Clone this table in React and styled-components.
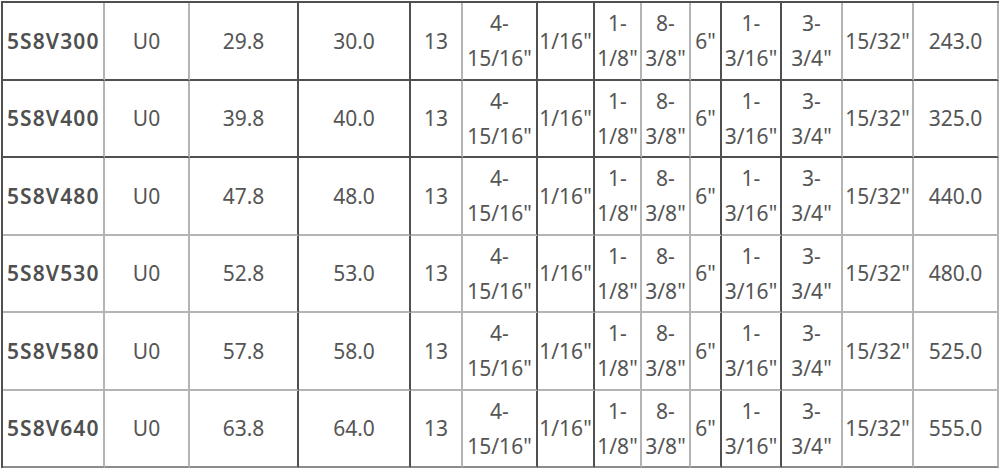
import React from "react";
import styled, { createGlobalStyle } from "styled-components";

const GlobalStyle = createGlobalStyle`
  html, body {
    margin: 0;
    padding: 0;
    background: #fff;
  }
  body {
    font-family: "Noto Sans", "Open Sans", sans-serif;
  }
`;

const DARK = "#505050";
const LIGHT = "#b4b4b4";
const MID = "#8c8c8c";

const Table = styled.table`
  margin: 1px 0 0 1px;
  width: 998px;
  table-layout: fixed;
  border-collapse: separate;
  border-spacing: 0;
  border-top: 2px solid ${DARK};
  border-left: 2px solid ${DARK};
  color: #555;
  font-size: 21px;
`;

const Col = styled.col`
  width: ${(p) => p.$w}px;
`;

const Row = styled.tr`
  height: ${(p) => p.$h}px;
`;

const Cell = styled.td`
  padding: 0;
  text-align: center;
  vertical-align: middle;
  line-height: 35px;
  white-space: nowrap;
  border-right: 2px solid ${(p) => p.$right};
  border-bottom: 2px solid ${(p) => p.$bottom};
`;

const ModelCell = styled(Cell)`
  text-align: left;
  padding-left: 4px;
  font-weight: 600;
  letter-spacing: 1.1px;
  color: #4f4f4f;
`;

const Line = styled.span`
  display: block;
`;

const columns = [
  { w: 102, border: LIGHT },
  { w: 85, border: LIGHT },
  { w: 109, border: DARK },
  { w: 112, border: DARK },
  { w: 52, border: LIGHT },
  { w: 75, border: DARK },
  { w: 57, border: DARK },
  { w: 47, border: LIGHT },
  { w: 49, border: LIGHT },
  { w: 31, border: DARK },
  { w: 60, border: DARK },
  { w: 61, border: LIGHT },
  { w: 71, border: LIGHT },
  { w: 85, border: LIGHT },
];

const rowBorders = [DARK, DARK, LIGHT, LIGHT, LIGHT, MID];

const belts = [
  ["5S8V300", "29.8", "30.0", "243.0"],
  ["5S8V400", "39.8", "40.0", "325.0"],
  ["5S8V480", "47.8", "48.0", "440.0"],
  ["5S8V530", "52.8", "53.0", "480.0"],
  ["5S8V580", "57.8", "58.0", "525.0"],
  ["5S8V640", "63.8", "64.0", "555.0"],
];

const shared = ['4-15/16"', '1/16"', '1-1/8"', '8-3/8"', '6"', '1-3/16"', '3-3/4"', '15/32"'];

const rows = belts.map(([model, pitch, od, weight]) => [
  model,
  "U0",
  pitch,
  od,
  "13",
  ...shared,
  weight,
]);

const renderValue = (value) => {
  const parts = value.split(/(?<=-)/);
  if (parts.length === 1) return value;
  return parts.map((part, i) => <Line key={i}>{part}</Line>);
};

const App = () => {
  return (
    <>
      <GlobalStyle />
      <Table>
        <colgroup>
          {columns.map((c, i) => (
            <Col key={i} $w={c.w} />
          ))}
        </colgroup>
        <tbody>
          {rows.map((row, r) => (
            <Row key={r} $h={r % 2 === 0 ? 78 : 77}>
              {row.map((value, c) => {
                const C = c === 0 ? ModelCell : Cell;
                return (
                  <C key={c} $right={columns[c].border} $bottom={rowBorders[r]}>
                    {renderValue(value)}
                  </C>
                );
              })}
            </Row>
          ))}
        </tbody>
      </Table>
    </>
  );
};

export default App;
